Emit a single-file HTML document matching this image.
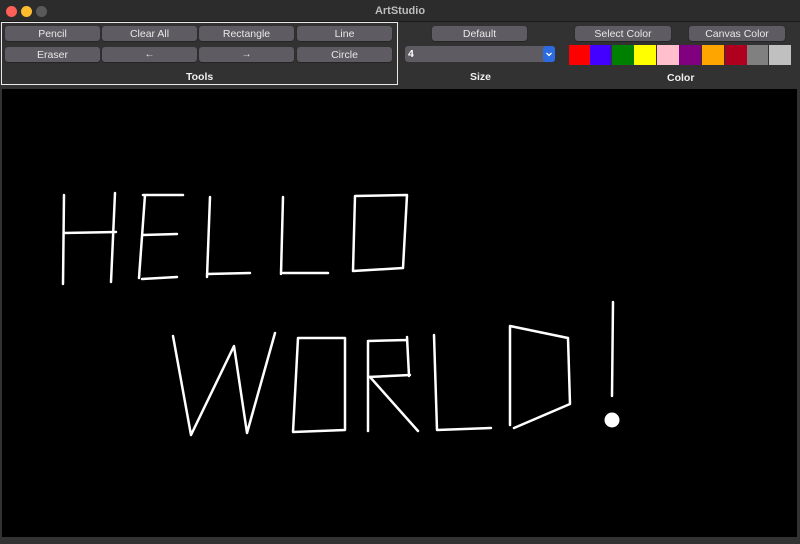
<!DOCTYPE html>
<html><head><meta charset="utf-8"><style>
*{margin:0;padding:0;box-sizing:border-box}
body{width:800px;height:544px;background:#323232;font-family:"Liberation Sans",sans-serif;position:relative;overflow:hidden;color:#e6e6e6}
.title{position:absolute;left:0;top:0;width:800px;height:22px;background:#2c2c2c;border-bottom:1px solid #1a1a1a;text-align:center;font-size:11px;font-weight:bold;line-height:22px;color:#bdbdbd}
.dot{position:absolute;top:6px;width:11px;height:11px;border-radius:50%}
.btn{position:absolute;height:15px;background:#5e5b62;border-radius:3px;font-size:10.5px;line-height:16px;text-align:center;color:#e8e8e8;box-shadow:0 0.5px 1px rgba(0,0,0,.5)}
.lbl{position:absolute;font-size:10.5px;font-weight:bold;color:#f0f0f0}
.sw{position:absolute;top:45px;height:20px}
</style></head><body>
<div class="title">ArtStudio</div>
<div class="dot" style="left:6px;background:#fe5f57"></div>
<div class="dot" style="left:21px;background:#febc2e"></div>
<div class="dot" style="left:36px;background:#5a5a5a"></div>
<div style="position:absolute;left:1px;top:22px;width:397px;height:63px;border:1.5px solid #e8e8e8"></div>
<div class="btn" style="left:5px;top:26px;width:95px">Pencil</div>
<div class="btn" style="left:102px;top:26px;width:95px">Clear All</div>
<div class="btn" style="left:199px;top:26px;width:95px">Rectangle</div>
<div class="btn" style="left:297px;top:26px;width:95px">Line</div>
<div class="btn" style="left:5px;top:47px;width:95px">Eraser</div>
<div class="btn" style="left:102px;top:47px;width:95px;font-size:10px">←</div>
<div class="btn" style="left:199px;top:47px;width:95px;font-size:10px">→</div>
<div class="btn" style="left:297px;top:47px;width:95px">Circle</div>
<div class="lbl" style="left:186px;top:71px">Tools</div>
<div class="btn" style="left:432px;top:26px;width:95px">Default</div>
<div class="btn" style="left:575px;top:26px;width:96px">Select Color</div>
<div class="btn" style="left:689px;top:26px;width:96px">Canvas Color</div>
<div style="position:absolute;left:405px;top:46px;width:150px;height:16px;background:#5e5b62;border-radius:3px;font-size:10.5px;font-weight:bold;line-height:16px;padding-left:3px;color:#fff">4</div>
<div style="position:absolute;left:543px;top:46px;width:12px;height:16px;background:#2d6be0;border-radius:3px"><svg width="12" height="16"><path d="M3.5 7L6 9.5L8.5 7" stroke="#fff" stroke-width="1.3" fill="none"/></svg></div>
<div class="lbl" style="left:470px;top:71px">Size</div>
<div class="lbl" style="left:667px;top:72px">Color</div>
<div class="sw" style="left:569px;width:21px;background:#ff0000"></div>
<div class="sw" style="left:590px;width:21px;background:#4400ff"></div>
<div class="sw" style="left:612px;width:22px;background:#008000"></div>
<div class="sw" style="left:634px;width:22px;background:#ffff00"></div>
<div class="sw" style="left:657px;width:22px;background:#ffc0cb"></div>
<div class="sw" style="left:679px;width:22px;background:#800080"></div>
<div class="sw" style="left:702px;width:22px;background:#ffa500"></div>
<div class="sw" style="left:725px;width:22px;background:#b00020"></div>
<div class="sw" style="left:747px;width:21px;background:#808080"></div>
<div class="sw" style="left:769px;width:22px;background:#c0c0c0"></div>
<div style="position:absolute;left:2px;top:89px;width:795px;height:448px;background:#000"></div>
<svg style="position:absolute;left:0;top:0" width="800" height="544" fill="none" stroke="#fff" stroke-width="2.5" stroke-linecap="round" stroke-linejoin="round">
<path d="M64 195L63 284M115 193L111 282M64 233L116 232"/>
<path d="M145 195L139 278M143 195L183 195M143 235L177 234M142 279L177 277"/>
<path d="M210 197L207 277M207 274L250 273"/>
<path d="M283 197L281 274M283 273L328 273"/>
<path d="M355 196L407 195L403 268L353 271Z"/>
<path d="M173 336L191 435L234 346L247 433L275 333"/>
<path d="M298 338L345 338L345 430L293 432Z"/>
<path d="M368 341L368 431M368 341L407 340M407 337L409 376M368 377L410 375M370 377L418 431"/>
<path d="M434 335L437 430M437 430L491 428"/>
<path d="M510 326L568 338L570 404L514 428M510 326L510 425"/>
<path d="M613 302L612 396"/>
<circle cx="612" cy="420" r="7.5" fill="#fff" stroke="none"/>
</svg>
</body></html>
